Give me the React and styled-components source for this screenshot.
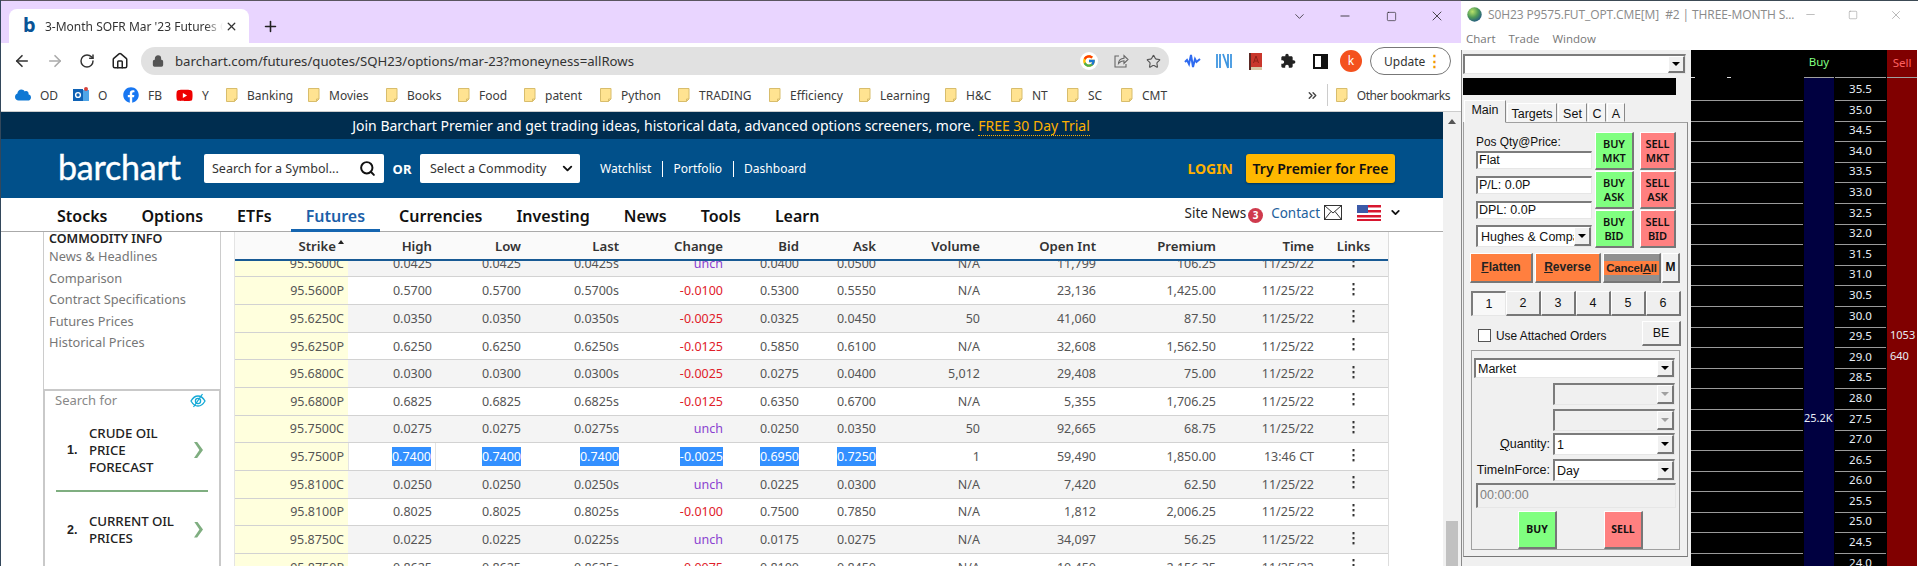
import React from 'react'
import styled, { createGlobalStyle, css } from 'styled-components'
import { ArrowLeft, ArrowRight, RotateCw, Home, Lock, Star, Plus, X, Minus, Square, ChevronDown, Search, ChevronsRight } from 'lucide-react'
import { FaFacebook, FaYoutube, FaCloud } from 'react-icons/fa'
import { FcGoogle } from 'react-icons/fc'

const GlobalStyle = createGlobalStyle`
    html, body { margin: 0; padding: 0; background: #fff; }
    * { box-sizing: border-box; }
`

const bookmarks = [
    { w: 58, label: 'OD', icon: 'cloud' },
    { w: 50, label: 'O', icon: 'outlook' },
    { w: 53, label: 'FB', icon: 'fb' },
    { w: 50, label: 'Y', icon: 'yt' },
    { w: 82, label: 'Banking' },
    { w: 78, label: 'Movies' },
    { w: 72, label: 'Books' },
    { w: 66, label: 'Food' },
    { w: 76, label: 'patent' },
    { w: 78, label: 'Python' },
    { w: 91, label: 'TRADING' },
    { w: 90, label: 'Efficiency' },
    { w: 86, label: 'Learning' },
    { w: 66, label: 'H&C' },
    { w: 56, label: 'NT' },
    { w: 54, label: 'SC' },
    { w: 60, label: 'CMT' },
]

const navItems = ['Stocks', 'Options', 'ETFs', 'Futures', 'Currencies', 'Investing', 'News', 'Tools', 'Learn']

const optionRows = [
    ['95.5600C', '0.0425', '0.0425', '0.0425s', 'unch', '0.0400', '0.0500', 'N/A', '11,799', '106.25', '11/25/22'],
    ['95.5600P', '0.5700', '0.5700', '0.5700s', '-0.0100', '0.5300', '0.5550', 'N/A', '23,136', '1,425.00', '11/25/22'],
    ['95.6250C', '0.0350', '0.0350', '0.0350s', '-0.0025', '0.0325', '0.0450', '50', '41,060', '87.50', '11/25/22'],
    ['95.6250P', '0.6250', '0.6250', '0.6250s', '-0.0125', '0.5850', '0.6100', 'N/A', '32,608', '1,562.50', '11/25/22'],
    ['95.6800C', '0.0300', '0.0300', '0.0300s', '-0.0025', '0.0275', '0.0400', '5,012', '29,408', '75.00', '11/25/22'],
    ['95.6800P', '0.6825', '0.6825', '0.6825s', '-0.0125', '0.6350', '0.6700', 'N/A', '5,355', '1,706.25', '11/25/22'],
    ['95.7500C', '0.0275', '0.0275', '0.0275s', 'unch', '0.0250', '0.0350', '50', '92,665', '68.75', '11/25/22'],
    ['95.7500P', '0.7400', '0.7400', '0.7400', '-0.0025', '0.6950', '0.7250', '1', '59,490', '1,850.00', '13:46 CT'],
    ['95.8100C', '0.0250', '0.0250', '0.0250s', 'unch', '0.0225', '0.0300', 'N/A', '7,420', '62.50', '11/25/22'],
    ['95.8100P', '0.8025', '0.8025', '0.8025s', '-0.0100', '0.7500', '0.7850', 'N/A', '1,812', '2,006.25', '11/25/22'],
    ['95.8750C', '0.0225', '0.0225', '0.0225s', 'unch', '0.0175', '0.0275', 'N/A', '34,097', '56.25', '11/25/22'],
    ['95.8750P', '0.8625', '0.8625', '0.8625s', '-0.0075', '0.8100', '0.8450', 'N/A', '10,450', '2,156.25', '11/25/22'],
]

const columns = ['High', 'Low', 'Last', 'Change', 'Bid', 'Ask', 'Volume', 'Open Int', 'Premium', 'Time']

const prices = ['35.5', '35.0', '34.5', '34.0', '33.5', '33.0', '32.5', '32.0', '31.5', '31.0', '30.5', '30.0', '29.5', '29.0', '28.5', '28.0', '27.5', '27.0', '26.5', '26.0', '25.5', '25.0', '24.5', '24.0']
const sellQty = { '29.5': '1053', '29.0': '640' }
const buyQty = { '27.5': '25.2K' }

function Folder() {
    return (
        <svg width="12" height="14" viewBox="0 0 12 14">
            <path d="M.5.5h10.5v10.5l-2.5 2.5H.5z" fill="#ffe391" stroke="#d8bd6c" />
            <path d="M8.5 13.5v-2.5H11" fill="none" stroke="#d8bd6c" />
        </svg>
    )
}

function BookmarkIcon({ type }) {
    if (type === 'cloud') return <FaCloud size={16} color="#0f78d4" />
    if (type === 'fb') return <FaFacebook size={16} color="#1877f2" />
    if (type === 'yt') return <FaYoutube size={17} color="#e00" />
    if (type === 'outlook') {
        return (
            <svg width="16" height="16" viewBox="0 0 16 16">
                <rect x="5" y="3" width="11" height="11" fill="#50a6e8" />
                <rect x="0" y="2" width="10" height="12" fill="#0f62b5" />
                <circle cx="5" cy="8" r="2.4" fill="none" stroke="#fff" strokeWidth="1.4" />
                <circle cx="13" cy="2" r="2" fill="#d6423c" />
            </svg>
        )
    }
    return <Folder />
}

function Dots() {
    return (
        <svg width="3" height="13" viewBox="0 0 3 13">
            <rect x=".5" width="2" height="2.4" fill="#333" />
            <rect x=".5" y="5" width="2" height="2.4" fill="#333" />
            <rect x=".5" y="10" width="2" height="2.4" fill="#333" />
        </svg>
    )
}

function OptionRow({ row, index }) {
    const selected = row[0] === '95.7500P'
    return (
        <Row $alt={index % 2 === 0}>
            <StrikeCell>{row[0]}</StrikeCell>
            {row.slice(1).map((value, i) => {
                const isChange = i === 3
                const tone = isChange ? (value === 'unch' ? 'unch' : 'down') : undefined
                return (
                    <Cell key={i} $tone={tone} $focus={selected && i === 0}>
                        {selected && i < 6 ? <Selected>{value}</Selected> : value}
                    </Cell>
                )
            })}
            <LinkCell><Dots /></LinkCell>
        </Row>
    )
}

function Browser() {
    return (
        <BrowserWindow>
            <TabStrip>
                <Tab>
                    <Favicon>b</Favicon>
                    <TabTitle>3-Month SOFR Mar '23 Futures Options Prices</TabTitle>
                    <X size={13} strokeWidth={2.4} color="#333" />
                </Tab>
                <NewTab><Plus size={17} strokeWidth={2.2} color="#222" /></NewTab>
                <WindowControls>
                    <WinControl><ChevronDown size={15} strokeWidth={1.2} color="#222" /></WinControl>
                    <WinControl><Minus size={14} strokeWidth={1.4} color="#222" /></WinControl>
                    <WinControl><Square size={11} strokeWidth={1.4} color="#222" /></WinControl>
                    <WinControl><X size={16} strokeWidth={1.2} color="#222" /></WinControl>
                </WindowControls>
            </TabStrip>
            <Toolbar>
                <ToolButton><ArrowLeft size={18} strokeWidth={2.2} color="#333" /></ToolButton>
                <ToolButton><ArrowRight size={18} strokeWidth={2.2} color="#aaa" /></ToolButton>
                <ToolButton><RotateCw size={16} strokeWidth={2.2} color="#333" /></ToolButton>
                <ToolButton><Home size={18} strokeWidth={2} color="#222" /></ToolButton>
                <Omnibox>
                    <Lock size={12} strokeWidth={2.6} color="#555" fill="#555" />
                    <Url>barchart.com/futures/quotes/SQH23/options/mar-23?moneyness=allRows</Url>
                    <OmniIcon><GoogleBadge><FcGoogle size={14} /></GoogleBadge></OmniIcon>
                    <OmniIcon>
                        <svg width="16" height="16" viewBox="0 0 16 16" fill="none" stroke="#666" strokeWidth="1.1">
                            <path d="M6 3H2v11h11v-3" />
                            <path d="M5.500 10.500c.3-3.200 2.500-5 5.500-5.200V2.500l4 4-4 4V7.700c-2.300 0-4 .9-5.500 2.800z" />
                        </svg>
                    </OmniIcon>
                    <OmniIcon><Star size={15} strokeWidth={1.8} color="#555" /></OmniIcon>
                </Omnibox>
                <ExtensionIcon>
                    <svg width="17" height="14" viewBox="0 0 17 14"><path d="M1 8l2-2 2 4 2-9 2 12 2-8 1.500 3L16 5" fill="none" stroke="#2f6bf0" strokeWidth="2" /></svg>
                </ExtensionIcon>
                <ExtensionIcon>
                    <svg width="16" height="16" viewBox="0 0 16 16"><path d="M1 1v14M4 1v14M7 1l5 14M12 1v14M15 1v14" fill="none" stroke="#3f96e0" strokeWidth="1.800" /></svg>
                </ExtensionIcon>
                <ExtensionIcon>
                    <svg width="14" height="17" viewBox="0 0 14 17"><rect x="1" width="12" height="14" fill="#c9372c" /><path d="M4.500 10L7 3l2.500 7M5.500 8h3" fill="none" stroke="#8e2219" /><rect x="1" y="14" width="12" height="3" fill="#d8c9a8" /><rect width="2" height="17" fill="#5b2a25" /></svg>
                </ExtensionIcon>
                <ExtensionIcon>
                    <svg width="16" height="16" viewBox="0 0 24 24"><path fill="#222" d="M20.500 11H19V7c0-1.100-.9-2-2-2h-4V3.500C13 2.120 11.880 1 10.500 1S8 2.120 8 3.500V5H4c-1.100 0-1.990.9-1.990 2v3.800H3.500c1.490 0 2.700 1.210 2.700 2.700s-1.210 2.700-2.700 2.700H2V20c0 1.100.9 2 2 2h3.800v-1.500c0-1.490 1.210-2.700 2.700-2.700 1.490 0 2.700 1.210 2.700 2.700V22H17c1.100 0 2-.9 2-2v-4h1.500c1.380 0 2.500-1.120 2.500-2.500S21.880 11 20.500 11z" /></svg>
                </ExtensionIcon>
                <ExtensionIcon>
                    <svg width="15" height="15" viewBox="0 0 15 15"><rect x="1" y="1" width="13" height="13" fill="none" stroke="#111" strokeWidth="2" /><rect x="8" y="1" width="6" height="13" fill="#111" /></svg>
                </ExtensionIcon>
                <Avatar>k</Avatar>
                <UpdateButton>Update<UpdateDots>⋮</UpdateDots></UpdateButton>
            </Toolbar>
            <BookmarkBar>
                {bookmarks.map((b) => (
                    <Bookmark key={b.label} $w={b.w}>
                        <BookmarkIcon type={b.icon} />
                        <span>{b.label}</span>
                    </Bookmark>
                ))}
                <MoreBookmarks>
                    <ChevronsRight size={13} strokeWidth={2.6} color="#444" />
                    <BarDivider />
                    <OtherBookmarks><Folder /><span>Other bookmarks</span></OtherBookmarks>
                </MoreBookmarks>
            </BookmarkBar>
            <BrowserBody>
                <Page>
                    <Banner>
                        Join Barchart Premier and get trading ideas, historical data, advanced options screeners, more.&nbsp;
                        <TrialLink>FREE 30 Day Trial</TrialLink>
                    </Banner>
                    <SiteHeader>
                        <Logo>barchart</Logo>
                        <SymbolSearch>
                            <span>Search for a Symbol...</span>
                            <Search size={17} strokeWidth={2.8} color="#111" />
                        </SymbolSearch>
                        <OrLabel>OR</OrLabel>
                        <CommoditySelect>
                            <span>Select a Commodity</span>
                            <ChevronDown size={15} strokeWidth={3} color="#111" />
                        </CommoditySelect>
                        <HeaderLinks>
                            <span>Watchlist</span><LinkBar />
                            <span>Portfolio</span><LinkBar />
                            <span>Dashboard</span>
                        </HeaderLinks>
                        <Login>LOGIN</Login>
                        <TryButton>Try Premier for Free</TryButton>
                    </SiteHeader>
                    <SiteNav>
                        {navItems.map((item) => (
                            <NavItem key={item} $active={item === 'Futures'}>{item}</NavItem>
                        ))}
                        <NavRight>
                            <span>Site News</span>
                            <NewsBadge>3</NewsBadge>
                            <ContactLink>Contact</ContactLink>
                            <svg width="18" height="15" viewBox="0 0 18 15">
                                <rect x=".5" y=".5" width="17" height="14" fill="none" stroke="#333" />
                                <path d="M.5.500L9 8l8.500-7.500M.5 14.500L7 6.500M17.500 14.500L11 6.500" fill="none" stroke="#333" />
                            </svg>
                            <FlagBox>
                                <svg width="24" height="16" viewBox="0 0 24 16">
                                    <rect width="24" height="16" fill="#fff" />
                                    <rect width="24" height="2.500" fill="#d8162f" />
                                    <rect y="5" width="24" height="2.500" fill="#d8162f" />
                                    <rect y="10" width="24" height="2.500" fill="#d8162f" />
                                    <rect y="14" width="24" height="2" fill="#d8162f" />
                                    <rect width="11" height="8" fill="#3b5aa8" />
                                </svg>
                            </FlagBox>
                            <ChevronDown size={13} strokeWidth={3.4} color="#111" />
                        </NavRight>
                    </SiteNav>
                    <Content>
                        <Sidebar>
                            <InfoBox>
                                <InfoTitle>COMMODITY INFO</InfoTitle>
                                <InfoLink>News &amp; Headlines</InfoLink>
                                <InfoLink>Comparison</InfoLink>
                                <InfoLink>Contract Specifications</InfoLink>
                                <InfoLink>Futures Prices</InfoLink>
                                <InfoLink>Historical Prices</InfoLink>
                            </InfoBox>
                            <AdBox>
                                <AdHead>
                                    <span>Search for</span>
                                    <svg width="16" height="15" viewBox="0 0 16 15" fill="none" stroke="#14a9d6" strokeWidth="1.300">
                                        <path d="M1 8c2-3.500 4.500-5 7-5s5 1.500 7 5c-2 3.500-4.500 5-7 5s-5-1.500-7-5z" />
                                        <circle cx="8" cy="8" r="2.600" />
                                        <path d="M12.500 1L3.500 14" />
                                    </svg>
                                </AdHead>
                                <AdItem>
                                    <AdNumber>1.</AdNumber>
                                    <AdText>CRUDE OIL<br />PRICE<br />FORECAST</AdText>
                                    <AdChevron />
                                </AdItem>
                                <AdRule />
                                <AdItem $second>
                                    <AdNumber>2.</AdNumber>
                                    <AdText>CURRENT OIL<br />PRICES</AdText>
                                    <AdChevron />
                                </AdItem>
                            </AdBox>
                        </Sidebar>
                        <OptionsTable>
                            <HeadRow>
                                <HeadCell>Strike<SortCaret /></HeadCell>
                                {columns.map((c) => <HeadCell key={c}>{c}</HeadCell>)}
                                <HeadCell $center>Links</HeadCell>
                            </HeadRow>
                            <TableBody>
                                <RowList>
                                    {optionRows.map((row, i) => <OptionRow key={row[0]} row={row} index={i} />)}
                                </RowList>
                            </TableBody>
                        </OptionsTable>
                    </Content>
                </Page>
                <Scrollbar>
                    <ScrollArrow />
                    <ScrollThumb />
                </Scrollbar>
            </BrowserBody>
        </BrowserWindow>
    )
}

function ChevronBox({ disabled }) {
    return <ComboArrow $disabled={disabled}><ArrowGlyph $disabled={disabled} /></ComboArrow>
}

function TradeForm() {
    return (
        <TradePanel>
            <ContractCombo><ChevronBox /></ContractCombo>
            <BlackBar />
            <PanelTabs>
                <PanelTab $active $w={42}>Main</PanelTab>
                <PanelTab $w={50}>Targets</PanelTab>
                <PanelTab $w={29}>Set</PanelTab>
                <PanelTab $w={18}>C</PanelTab>
                <PanelTab $w={18}>A</PanelTab>
            </PanelTabs>
            <TabBody>
                <TopBlock>
                    <FieldColumn>
                        <PosLabel>Pos Qty@Price:</PosLabel>
                        <Field>Flat</Field>
                        <Field>P/L: 0.0P</Field>
                        <Field>DPL: 0.0P</Field>
                        <AccountCombo><span>Hughes &amp; Company</span><ChevronBox /></AccountCombo>
                    </FieldColumn>
                    <QuickColumn>
                        <QuickButton $buy>BUY<br />MKT</QuickButton>
                        <QuickButton $buy>BUY<br />ASK</QuickButton>
                        <QuickButton $buy>BUY<br />BID</QuickButton>
                    </QuickColumn>
                    <QuickColumn>
                        <QuickButton>SELL<br />MKT</QuickButton>
                        <QuickButton>SELL<br />ASK</QuickButton>
                        <QuickButton>SELL<br />BID</QuickButton>
                    </QuickColumn>
                </TopBlock>
                <ActionRow>
                    <ActionButton $w={63}><u>F</u>latten</ActionButton>
                    <ActionButton $w={66}><u>R</u>everse</ActionButton>
                    <CancelButton><CancelInner>Cancel<u>A</u>ll</CancelInner></CancelButton>
                    <MButton>M</MButton>
                </ActionRow>
                <NumberTabs>
                    {[1, 2, 3, 4, 5, 6].map((n) => <NumberTab key={n} $active={n === 1}>{n}</NumberTab>)}
                </NumberTabs>
                <AttachRow>
                    <CheckBox />
                    <AttachLabel>Use Attached Orders</AttachLabel>
                    <BeButton>BE</BeButton>
                </AttachRow>
                <OrderGroup>
                    <MarketCombo><span>Market</span><ChevronBox /></MarketCombo>
                    <OrderRow $gap={5}><span /><OrderCombo $disabled><ChevronBox disabled /></OrderCombo></OrderRow>
                    <OrderRow $gap={4}><span /><OrderCombo $disabled><ChevronBox disabled /></OrderCombo></OrderRow>
                    <OrderRow $gap={2}>
                        <OrderLabel><u>Q</u>uantity:</OrderLabel>
                        <OrderCombo><span>1</span><ChevronBox /></OrderCombo>
                    </OrderRow>
                    <OrderRow $gap={4}>
                        <OrderLabel>TimeInForce:</OrderLabel>
                        <OrderCombo><span>Day</span><ChevronBox /></OrderCombo>
                    </OrderRow>
                    <TimeField>00:00:00</TimeField>
                    <SubmitRow>
                        <SubmitButton $buy>BUY</SubmitButton>
                        <SubmitButton>SELL</SubmitButton>
                    </SubmitRow>
                </OrderGroup>
            </TabBody>
        </TradePanel>
    )
}

function Ladder() {
    return (
        <LadderGrid>
            <LadderHead>
                <MarkCell />
                <HeadBuy>Buy</HeadBuy>
                <LadderHeadCell />
                <HeadSell>Sell</HeadSell>
            </LadderHead>
            {prices.map((p) => (
                <LadderRow key={p}>
                    <BlankCell />
                    <BuyCell>{buyQty[p]}</BuyCell>
                    <PriceCell>{p}</PriceCell>
                    <SellCell>{sellQty[p]}</SellCell>
                </LadderRow>
            ))}
        </LadderGrid>
    )
}

export default function App() {
    return (
        <Screen>
            <GlobalStyle />
            <Browser />
            <TradeWindow>
                <TitleBar>
                    <svg width="15" height="15" viewBox="0 0 15 15">
                        <defs>
                            <radialGradient id="globe" cx="35%" cy="30%" r="80%">
                                <stop offset="0" stopColor="#b9e26a" />
                                <stop offset=".5" stopColor="#4f9a58" />
                                <stop offset="1" stopColor="#1c4f88" />
                            </radialGradient>
                        </defs>
                        <circle cx="7.5" cy="7.5" r="7.2" fill="url(#globe)" />
                    </svg>
                    <TitleText>S0H23 P9575.FUT_OPT.CME[M]&nbsp; #2 | THREE-MONTH S...</TitleText>
                    <TitleControls>
                        <Minus size={13} strokeWidth={1} color="#888" />
                        <Square size={10} strokeWidth={1.2} color="#888" />
                        <X size={14} strokeWidth={1} color="#888" />
                    </TitleControls>
                </TitleBar>
                <MenuBar>
                    <span>Chart</span>
                    <span>Trade</span>
                    <span>Window</span>
                </MenuBar>
                <TradeMain>
                    <TradeForm />
                    <Ladder />
                </TradeMain>
            </TradeWindow>
        </Screen>
    )
}

const winFont = `"Liberation Sans", Arial, sans-serif`
const siteFont = `"Noto Sans", "Open Sans", sans-serif`

const raised = css`
    border-style: solid;
    border-width: 1px 2px 2px 1px;
    border-color: #fff #777 #777 #fff;
`
const sunken = css`
    border-style: solid;
    border-width: 2px 1px 1px 2px;
    border-color: #7c7c7c #e6e6e6 #e6e6e6 #7c7c7c;
`

const Screen = styled.div`
    display: flex;
    width: 1918px;
    height: 566px;
    overflow: hidden;
    background: #fff;
`
const BrowserWindow = styled.div`
    width: 1461px;
    height: 566px;
    display: flex;
    flex-direction: column;
    flex-shrink: 0;
    overflow: hidden;
    border-left: 1px solid #33475b;
`
const TabStrip = styled.div`
    height: 43px;
    flex-shrink: 0;
    display: flex;
    align-items: flex-end;
    padding-left: 8px;
    background: #e9d5ff;
    border-top: 1px solid #5a5560;
`
const Tab = styled.div`
    width: 240px;
    height: 34px;
    display: flex;
    align-items: center;
    padding: 0 11px 0 14px;
    background: #fff;
    border-radius: 8px 8px 0 0;
`
const Favicon = styled.span`
    font: 700 20px ${siteFont};
    line-height: 20px;
    color: #0a5496;
    width: 22px;
    margin-top: -3px;
`
const TabTitle = styled.span`
    flex: 1;
    min-width: 0;
    margin-right: 2px;
    overflow: hidden;
    white-space: nowrap;
    font: 12px ${siteFont};
    color: #333;
    -webkit-mask-image: linear-gradient(90deg, #000 90%, transparent);
`
const NewTab = styled.div`
    width: 42px;
    height: 34px;
    display: flex;
    align-items: center;
    justify-content: center;
`
const WindowControls = styled.div`
    margin-left: auto;
    height: 42px;
    display: flex;
    align-items: center;
    padding: 0 1px 12px 0;
`
const WinControl = styled.div`
    width: 46px;
    display: flex;
    justify-content: center;
`
const Toolbar = styled.div`
    height: 36px;
    flex-shrink: 0;
    display: flex;
    align-items: center;
    padding: 0 9px 0 5px;
    background: #fff;
`
const ToolButton = styled.div`
    width: 32.5px;
    display: flex;
    justify-content: center;
`
const Omnibox = styled.div`
    width: 1028px;
    height: 28px;
    margin: 0 7px 0 5px;
    display: flex;
    align-items: center;
    padding-left: 11px;
    background: #e1e1e1;
    border-radius: 14px;
`
const Url = styled.span`
    flex: 1;
    margin-left: 11px;
    font: 13.200px ${siteFont};
    color: #333;
`
const OmniIcon = styled.div`
    width: 32px;
    display: flex;
    justify-content: center;
`
const GoogleBadge = styled.div`
    width: 18px;
    height: 18px;
    display: flex;
    align-items: center;
    justify-content: center;
    background: #fff;
    border-radius: 50%;
`
const ExtensionIcon = styled.div`
    width: 32px;
    display: flex;
    justify-content: center;
`
const Avatar = styled.div`
    width: 22px;
    height: 22px;
    margin-left: 4px;
    border-radius: 50%;
    background: #f4511e;
    color: #fff;
    font: 12px/22px ${siteFont};
    text-align: center;
`
const UpdateButton = styled.div`
    width: 81px;
    height: 28px;
    margin-left: 8px;
    display: flex;
    align-items: center;
    justify-content: space-between;
    padding: 0 8px 0 13px;
    border: 1px solid #777;
    border-radius: 14px;
    font: 12px ${siteFont};
    color: #333;
`
const UpdateDots = styled.span`
    font: 700 15px ${winFont};
    color: #f29900;
`
const BookmarkBar = styled.div`
    height: 33px;
    flex-shrink: 0;
    display: flex;
    align-items: center;
    padding: 0 11px 0 14px;
    background: #fff;
    border-bottom: 1px solid #ccc;
`
const Bookmark = styled.div`
    width: ${(p) => (p.$w ? `${p.$w}px` : 'auto')};
    flex-shrink: 0;
    display: flex;
    align-items: center;
    gap: 9px;
    font: 12px ${siteFont};
    color: #3c3c3c;
    white-space: nowrap;
`
const MoreBookmarks = styled.div`
    margin-left: auto;
    display: flex;
    align-items: center;
`
const BarDivider = styled.div`
    width: 1px;
    height: 22px;
    margin: 0 8px;
    background: #ccc;
`
const OtherBookmarks = styled(Bookmark)`
    letter-spacing: -.4px;
`
const BrowserBody = styled.div`
    flex: 1;
    min-height: 0;
    display: flex;
`
const Page = styled.div`
    width: 1442px;
    flex-shrink: 0;
    display: flex;
    flex-direction: column;
    min-height: 0;
`
const Banner = styled.div`
    height: 27px;
    flex-shrink: 0;
    background: #002d4f;
    color: #fff;
    font: 14px/27px ${siteFont};
    text-align: center;
    padding-right: 2px;
`
const TrialLink = styled.span`
    color: #ffb000;
    border-bottom: 1px dotted #ffb000;
`
const SiteHeader = styled.div`
    height: 59px;
    flex-shrink: 0;
    display: flex;
    align-items: center;
    padding: 0 48px 0 57px;
    background: #01508a;
    color: #fff;
`
const Logo = styled.div`
    width: 146px;
    font: 400 34px "Lato", sans-serif;
    letter-spacing: -.2px;
    line-height: 30px;
    margin-top: -3px;
    -webkit-text-stroke: .4px #fff;
`
const SymbolSearch = styled.div`
    width: 180px;
    height: 29px;
    display: flex;
    align-items: center;
    justify-content: space-between;
    padding: 0 8px;
    background: #fff;
    border-radius: 2px;
    color: #333;
    font: 12.500px ${siteFont};
`
const OrLabel = styled.div`
    width: 36px;
    text-align: center;
    font: 700 13px ${siteFont};
`
const CommoditySelect = styled(SymbolSearch)`
    width: 160px;
    padding: 0 5px 0 10px;
`
const HeaderLinks = styled.div`
    margin-left: 20px;
    display: flex;
    align-items: center;
    gap: 10.500px;
    font: 12px ${siteFont};
`
const LinkBar = styled.div`
    width: 1px;
    height: 16px;
    background: #fff;
`
const Login = styled.div`
    margin-left: auto;
    color: #ffb000;
    font: 700 14px ${siteFont};
`
const TryButton = styled.div`
    width: 149px;
    height: 29px;
    margin-left: 13px;
    background: #ffb800;
    border-radius: 3px;
    color: #111;
    font: 600 14px/29px ${siteFont};
    text-align: center;
    box-shadow: 0 1px 2px rgba(0, 0, 0, .35);
`
const SiteNav = styled.div`
    height: 34px;
    flex-shrink: 0;
    display: flex;
    align-items: stretch;
    gap: 4px;
    padding-left: 41px;
    background: #fff;
    border-bottom: 1px solid #aaa;
`
const NavItem = styled.div`
    display: flex;
    align-items: center;
    padding: 5px 15px 0;
    margin-bottom: -1px;
    font: 600 16px ${siteFont};
    color: ${(p) => (p.$active ? '#1c5fa8' : '#111')};
    border-bottom: 3px solid ${(p) => (p.$active ? '#1565b0' : 'transparent')};
`
const NavRight = styled.div`
    margin-left: auto;
    display: flex;
    align-items: center;
    padding: 0 41px 4px 0;
    font: 13.500px ${siteFont};
    color: #222;
`
const NewsBadge = styled.div`
    width: 15px;
    height: 15px;
    margin: 5px 0 0 2px;
    border-radius: 50%;
    background: #cf3a4d;
    color: #fff;
    font: 700 10px/15px ${siteFont};
    text-align: center;
`
const ContactLink = styled.span`
    margin: 0 4px 0 8px;
    color: #235f9c;
`
const FlagBox = styled.div`
    margin: 0 8px 0 15px;
    height: 16px;
`
const Content = styled.div`
    flex: 1;
    min-height: 0;
    display: flex;
`
const Sidebar = styled.div`
    margin-left: 42px;
    flex-shrink: 0;
    display: flex;
    flex-direction: column;
    margin-right: 13px;
    width: 178px;
`
const InfoBox = styled.div`
    height: 157px;
    flex-shrink: 0;
    padding: 0 0 0 5px;
    border-left: 1px solid #ccc;
    border-right: 1px solid #ccc;
`
const InfoTitle = styled.div`
    font: 600 12.500px/14px ${siteFont};
    color: #222;
    overflow: hidden;
`
const InfoLink = styled.div`
    font: 12.800px/21.600px ${siteFont};
    color: #777;
`
const AdBox = styled.div`
    flex: 1;
    border: 2px solid #c9c9c9;
    border-bottom: 0;
    padding: 0 10px 0 9px;
`
const AdHead = styled.div`
    display: flex;
    justify-content: space-between;
    align-items: center;
    height: 20px;
    padding-right: 3px;
    font: 13px ${siteFont};
    color: #888;
    margin: -1px 0 1px 1px;
`
const AdItem = styled.div`
    display: flex;
    align-items: center;
    height: ${(p) => (p.$second ? '75px' : '78px')};
    padding-left: 13px;
`
const AdNumber = styled.div`
    width: 22px;
    flex-shrink: 0;
    font: 700 12.500px ${winFont};
    color: #222;
`
const AdText = styled.div`
    flex: 1;
    font: 500 13.300px/17px ${siteFont};
    letter-spacing: -.1px;
    color: #222;
    white-space: nowrap;
`
const AdChevron = styled.div`
    width: 9px;
    height: 16px;
    flex-shrink: 0;
    margin-right: 6px;
    background: #7fae80;
    clip-path: polygon(0 0, 35% 0, 100% 50%, 35% 100%, 0 100%, 60% 50%);
`
const AdRule = styled.div`
    height: 2px;
    margin: 1px 1px 0 2px;
    background: #7fae80;
`
const gridCols = '113px 88px 89px 98px 104px 76px 77px 104px 116px 120px 98px 71px'
const OptionsTable = styled.div`
    width: 1155px;
    flex-shrink: 0;
    display: flex;
    flex-direction: column;
    min-height: 0;
    border-left: 1px solid #e4e4e4;
    border-right: 1px solid #ddd;
    font-family: ${siteFont};
`
const HeadRow = styled.div`
    height: 29px;
    flex-shrink: 0;
    display: grid;
    grid-template-columns: ${gridCols};
    align-items: center;
    background: #fafafa;
    border-bottom: 2px solid #185a94;
`
const HeadCell = styled.div`
    padding-right: ${(p) => (p.$center ? '0' : '4px')};
    text-align: ${(p) => (p.$center ? 'center' : 'right')};
    font: 600 13.200px ${siteFont};
    color: #333;
`
const SortCaret = styled.span`
    display: inline-block;
    width: 0;
    height: 0;
    margin: 0 0 7px 2px;
    border-left: 3px solid transparent;
    border-right: 3px solid transparent;
    border-bottom: 4px solid #222;
`
const TableBody = styled.div`
    flex: 1;
    min-height: 0;
    overflow: hidden;
`
const RowList = styled.div`
    margin-top: -11.300px;
`
const Row = styled.div`
    height: 27.670px;
    display: grid;
    grid-template-columns: ${gridCols};
    align-items: stretch;
    background: ${(p) => (p.$alt ? '#f4f4f4' : '#fff')};
    border-bottom: 1px solid #d2d2d2;
`
const Cell = styled.div`
    display: flex;
    align-items: center;
    justify-content: flex-end;
    padding-right: 4px;
    font-size: 12.500px;
    color: ${(p) => (p.$tone === 'down' ? '#e0202a' : p.$tone === 'unch' ? '#8a3fd0' : '#555')};
    ${(p) => p.$focus && css`
        background: #fff;
        border: 1px solid #e4e4e4;
        border-width: 0 1px;
    `}
`
const StrikeCell = styled(Cell)`
    background: #ffffdd;
`
const LinkCell = styled.div`
    display: flex;
    align-items: center;
    justify-content: center;
    padding-bottom: 3px;
`
const Selected = styled.span`
    background: #3390ff;
    color: #fff;
    line-height: 19px;
`
const Scrollbar = styled.div`
    flex: 1;
    display: flex;
    flex-direction: column;
    align-items: center;
    background: #f1f1f1;
`
const ScrollArrow = styled.div`
    margin-top: 7px;
    width: 0;
    height: 0;
    border-left: 4px solid transparent;
    border-right: 4px solid transparent;
    border-bottom: 5px solid #555;
`
const ScrollThumb = styled.div`
    margin-top: auto;
    width: 12px;
    height: 45px;
    background: #c1c1c1;
`
const TradeWindow = styled.div`
    flex: 1;
    display: flex;
    flex-direction: column;
    min-width: 0;
    height: 566px;
    background: #fff;
    border-top: 1px solid #3c4a55;
`
const TitleBar = styled.div`
    height: 27px;
    flex-shrink: 0;
    display: flex;
    align-items: center;
    padding-left: 6px;
    color: #8a8a8a;
`
const TitleText = styled.span`
    margin-left: 6px;
    font: 12px "Open Sans", sans-serif;
    white-space: nowrap;
    letter-spacing: -.1px;
`
const TitleControls = styled.div`
    margin-left: auto;
    width: 114px;
    display: flex;
    align-items: center;
    justify-content: space-between;
    padding-right: 15px;
`
const MenuBar = styled.div`
    height: 22px;
    flex-shrink: 0;
    display: flex;
    gap: 13px;
    padding: 3px 0 0 5px;
    font: 11.500px "Open Sans", sans-serif;
    color: #777;
`
const TradeMain = styled.div`
    flex: 1;
    min-height: 0;
    display: flex;
`
const TradePanel = styled.div`
    width: 230px;
    flex-shrink: 0;
    padding: 4px 0 0 2px;
    background: #f0f0f0;
    font: 11.900px ${winFont};
    color: #111;
    border-left: 1px solid #8a8a8a;
`
const comboBase = css`
    display: flex;
    align-items: center;
    justify-content: space-between;
    padding-left: 2px;
    background: #fff;
    white-space: nowrap;
    overflow: hidden;
    ${sunken}
`
const ContractCombo = styled.div`
    ${comboBase}
    width: 223px;
    height: 20px;
    justify-content: flex-end;
    margin-left: -1px;
`
const ComboArrow = styled.div`
    width: 17px;
    height: 100%;
    flex-shrink: 0;
    display: flex;
    align-items: center;
    justify-content: center;
    background: #f0f0f0;
    ${raised}
`
const ArrowGlyph = styled.div`
    width: 0;
    height: 0;
    border-left: 4px solid transparent;
    border-right: 4px solid transparent;
    border-top: 4px solid ${(p) => (p.$disabled ? '#a0a0a0' : '#000')};
`
const BlackBar = styled.div`
    width: 213px;
    height: 17px;
    margin: 4px 0 0 -1px;
    background: #000;
`
const PanelTabs = styled.div`
    display: flex;
    align-items: flex-end;
    gap: 1px;
    height: 21px;
    margin: 6px 0 0 0;
`
const PanelTab = styled.div`
    width: ${(p) => p.$w}px;
    height: ${(p) => (p.$active ? '23px' : '19px')};
    text-align: center;
    line-height: ${(p) => (p.$active ? '18px' : '20px')};
    font-size: 12.500px;
    background: ${(p) => (p.$active ? '#f0f0f0' : '#f4f4f4')};
    border: 1px solid #a8a8a8;
    border-color: #fff #888 transparent #fff;
    position: relative;
    z-index: 1;
    margin-bottom: ${(p) => (p.$active ? '-1px' : '0')};
`
const TabBody = styled.div`
    width: 225px;
    height: 435px;
    margin-left: -1px;
    border: 1px solid #a0a0a0;
    border-right-color: #8a8a8a;
    border-bottom-color: #777;
`
const TopBlock = styled.div`
    display: grid;
    grid-template-columns: 116px 39px 39px;
    column-gap: 3px;
    margin: 9px 0 0 12px;
    & > :last-child { margin-left: 3px; }
`
const FieldColumn = styled.div`
    display: flex;
    flex-direction: column;
    gap: 7px;
`
const PosLabel = styled.div`
    height: 12px;
    line-height: 20px;
`
const Field = styled.div`
    height: 18px;
    padding-left: 1px;
    line-height: 15px;
    font-size: 12.500px;
    background: #fff;
    ${sunken}
`
const AccountCombo = styled.div`
    ${comboBase}
    height: 22px;
    margin-top: -1px;
    padding-left: 3px;
    font-size: 12.500px;
    & > span { overflow: hidden; flex: 1; }
`
const QuickColumn = styled.div`
    display: flex;
    flex-direction: column;
    gap: 1px;
`
const QuickButton = styled.div`
    height: 38px;
    padding-top: 4px;
    text-align: center;
    background: ${(p) => (p.$buy ? '#80ff80' : '#ff8080')};
    font: 600 11px/14px ${siteFont};
    letter-spacing: -.1px;
    color: #111;
    ${raised}
`
const ActionRow = styled.div`
    display: flex;
    gap: 2px;
    margin: 5px 0 0 6px;
`
const ActionButton = styled.div`
    width: ${(p) => p.$w}px;
    height: 30px;
    background: #ff7f3f;
    text-align: center;
    font: 700 12px/27px ${winFont};
    color: #222;
    ${raised}
`
const CancelButton = styled.div`
    width: 58px;
    height: 30px;
    display: flex;
    align-items: center;
    background: #909090;
    ${raised}
`
const CancelInner = styled.div`
    width: 100%;
    height: 14px;
    background: #ff7f3f;
    text-align: center;
    font: 700 11.500px/14px ${winFont};
    letter-spacing: -.2px;
    color: #222;
    white-space: nowrap;
`
const MButton = styled.div`
    width: 18px;
    height: 30px;
    margin-left: -1px;
    background: #f0f0f0;
    text-align: center;
    font: 700 12px/27px ${winFont};
    ${raised}
`
const NumberTabs = styled.div`
    display: flex;
    margin: 8px 0 0 7px;
`
const NumberTab = styled.div`
    width: 35px;
    height: 25px;
    background: ${(p) => (p.$active ? '#f8f8f8' : '#efefef')};
    text-align: center;
    line-height: 23px;
    font-size: 12.500px;
    ${(p) => (p.$active ? sunken : raised)}
`
const AttachRow = styled.div`
    display: flex;
    align-items: center;
    height: 25px;
    width: 210px;
    margin: 5px 0 0 7px;
    padding-left: 7px;
`
const CheckBox = styled.div`
    width: 13px;
    height: 13px;
    margin-top: 3px;
    background: #fff;
    border: 1px solid #555;
`
const AttachLabel = styled.div`
    flex: 1;
    margin: 5px 0 0 5px;
`
const BeButton = styled.div`
    width: 39px;
    height: 25px;
    background: #f0f0f0;
    text-align: center;
    line-height: 22px;
    font-size: 12.500px;
    ${raised}
`
const OrderGroup = styled.div`
    width: 209px;
    height: 200px;
    margin: 4px 0 0 7px;
    padding: 7px 0 0 2px;
    border: 1px solid #a0a0a0;
    font-size: 12.500px;
`
const MarketCombo = styled.div`
    ${comboBase}
    width: 201px;
    height: 20px;
`
const OrderRow = styled.div`
    display: grid;
    grid-template-columns: 76px 122px;
    column-gap: 3px;
    align-items: center;
    height: 22px;
    margin-top: ${(p) => p.$gap}px;
`
const OrderLabel = styled.div`
    text-align: right;
    white-space: nowrap;
`
const OrderCombo = styled.div`
    ${comboBase}
    height: 22px;
    background: ${(p) => (p.$disabled ? '#f0f0f0' : '#fff')};
    justify-content: ${(p) => (p.$disabled ? 'flex-end' : 'space-between')};
`
const TimeField = styled.div`
    width: 200px;
    height: 25px;
    margin: 2px 0 0 2px;
    padding-left: 2px;
    line-height: 21px;
    color: #808080;
    background: #f0f0f0;
    ${sunken}
`
const SubmitRow = styled.div`
    display: flex;
    gap: 47px;
    margin: 3px 0 0 44px;
`
const SubmitButton = styled.div`
    width: 39px;
    height: 38px;
    background: ${(p) => (p.$buy ? '#80ff80' : '#ff8080')};
    text-align: center;
    font: 700 10.500px/34px ${siteFont};
    color: #111;
    ${raised}
`
const ladderCols = '112px 30px 51px 30px'
const LadderGrid = styled.div`
    width: 226px;
    background: #000;
    overflow: hidden;
    font: 11.500px ${siteFont};
    color: #e8eef6;
`
const LadderHead = styled.div`
    height: 28px;
    display: grid;
    grid-template-columns: ${ladderCols};
    column-gap: 1px;
`
const LadderHeadCell = styled.div`
    border-bottom: 1px solid #a0a0a0;
`
const MarkCell = styled.div`
    background:
        linear-gradient(#ddd, #ddd) 0 100% / 4px 1px no-repeat,
        linear-gradient(#ddd, #ddd) 36px 100% / 4px 1px no-repeat;
`
const HeadBuy = styled(LadderHeadCell)`
    color: #80ff80;
    text-align: center;
    padding-top: 4px;
`
const HeadSell = styled(LadderHeadCell)`
    background: #800000;
    color: #ff6060;
    text-align: center;
    padding-top: 5px;
`
const LadderRow = styled.div`
    height: 20.600px;
    display: grid;
    grid-template-columns: ${ladderCols};
    column-gap: 1px;
`
const ladderCell = css`
    border-bottom: 1px solid #9a9a9a;
    line-height: 20px;
    white-space: nowrap;
`
const BlankCell = styled.div`
    ${ladderCell}
`
const BuyCell = styled.div`
    ${ladderCell}
    background: #000040;
    font-size: 11px;
`
const PriceCell = styled.div`
    ${ladderCell}
    line-height: 22px;
    text-align: center;
`
const SellCell = styled.div`
    ${ladderCell}
    background: #800000;
    padding-left: 3px;
    font-size: 11px;
`
